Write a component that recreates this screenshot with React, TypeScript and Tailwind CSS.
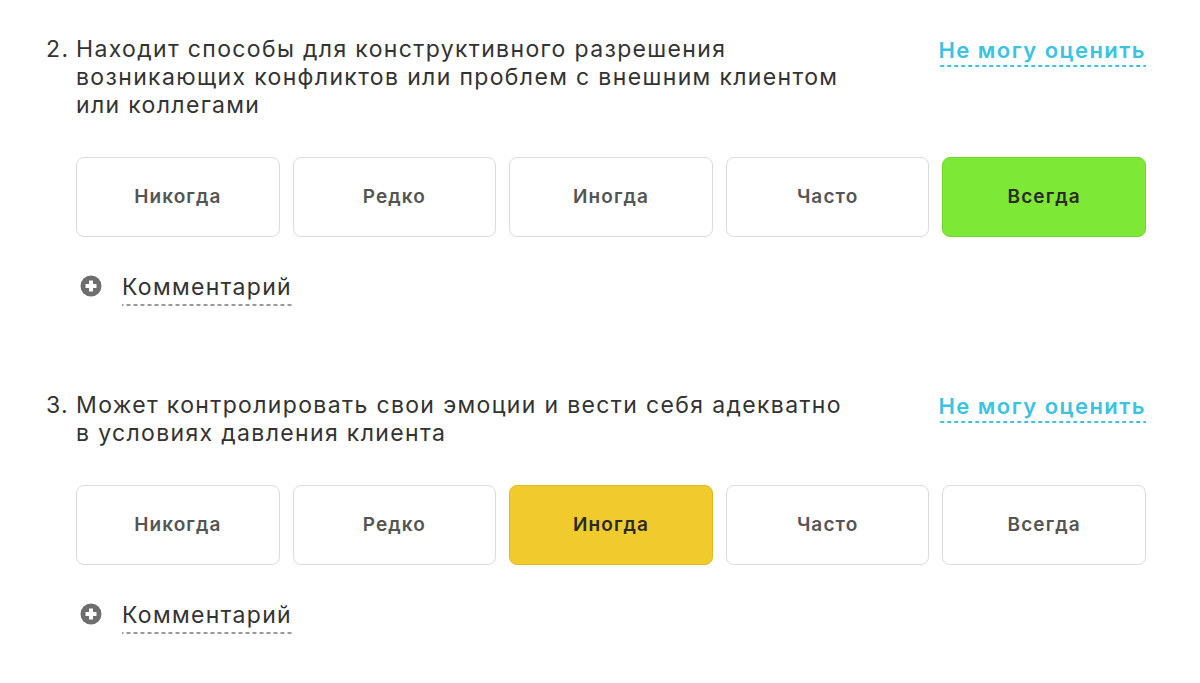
import React, { useState } from 'react';

const OPTIONS = ['Никогда', 'Редко', 'Иногда', 'Часто', 'Всегда'];

interface Question {
    num: number;
    lines: string[];
    value: string;
}

const QUESTIONS: Question[] = [
    {
        num: 2,
        lines: [
            'Находит способы для конструктивного разрешения',
            'возникающих конфликтов или проблем с внешним клиентом',
            'или коллегами',
        ],
        value: 'Всегда',
    },
    {
        num: 3,
        lines: ['Может контролировать свои эмоции и вести себя адекватно', 'в условиях давления клиента'],
        value: 'Иногда',
    },
];

const selectedStyle = (opt: string) => {
    if (opt === 'Иногда') return 'bg-[#f1ca2e] border-[#e3ba1c] text-[#2b2b2b]';
    return 'bg-[#7ee836] border-[#6fd62a] text-[#2b2b2b]';
};

const PlusIcon = () => (
    <svg width="22" height="22" viewBox="0 0 22 22">
        <circle cx="11" cy="11" r="10.5" fill="#6e6e6e" />
        <rect x="5.5" y="9" width="11" height="4" rx="0.5" fill="#fff" />
        <rect x="9" y="5.5" width="4" height="11" rx="0.5" fill="#fff" />
    </svg>
);

const QuestionBlock: React.FC<{ q: Question }> = ({ q }) => {
    const [value, setValue] = useState(q.value);
    return (
        <div className="flex flex-col">
            <div className="flex items-start justify-between">
                <div className="flex text-[23px] leading-[28px] tracking-[1.35px] text-[#333]">
                    <span className="w-[30px] shrink-0">{q.num}.</span>
                    <div>
                        {q.lines.map((l, i) => (
                            <div key={i}>{l}</div>
                        ))}
                    </div>
                </div>
                <button className="mt-px pb-[3px] text-[22px] leading-[28px] tracking-[1.45px] font-semibold text-[#3cc3e2] bg-[linear-gradient(to_right,#3cc3e2_60%,transparent_0)] bg-[length:7px_2px] bg-repeat-x bg-bottom">
                    Не могу оценить
                </button>
            </div>
            <div className="ml-[30px] mt-[38px] grid grid-cols-5 gap-[13px]">
                {OPTIONS.map((opt) => (
                    <button
                        key={opt}
                        onClick={() => setValue(opt)}
                        className={`h-[80px] rounded-[8px] border text-[19px] tracking-[1.1px] font-semibold ${
                            value === opt ? selectedStyle(opt) : 'bg-white border-[#dcdcdc] text-[#555]'
                        }`}
                    >
                        {opt}
                    </button>
                ))}
            </div>
            <div className="ml-[34px] mt-[36px] flex items-center gap-[20px]">
                <div className="mt-[-8px]">
                    <PlusIcon />
                </div>
                <span className="pb-[5px] text-[23px] leading-[28px] tracking-[1.3px] text-[#333] bg-[linear-gradient(to_right,#9a9a9a_60%,transparent_0)] bg-[length:7px_2px] bg-repeat-x bg-bottom">
                    Комментарий
                </span>
            </div>
        </div>
    );
};

export default function App() {
    return (
        <div className="min-h-[683px] bg-white pl-[46px] pr-[54px] pt-[35px] font-['Inter',sans-serif]">
            <div className="flex flex-col gap-[85px]">
                {QUESTIONS.map((q) => (
                    <QuestionBlock key={q.num} q={q} />
                ))}
            </div>
        </div>
    );
}
